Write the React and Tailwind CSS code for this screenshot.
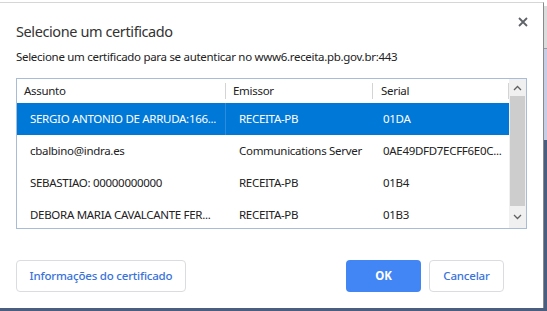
import React from "react";

const rows = [
  { subject: "SERGIO ANTONIO DE ARRUDA:166...", issuer: "RECEITA-PB", serial: "01DA", selected: true },
  { subject: "cbalbino@indra.es", issuer: "Communications Server", serial: "0AE49DFD7ECFF6E0C..." },
  { subject: "SEBASTIAO: 00000000000", issuer: "RECEITA-PB", serial: "01B4" },
  { subject: "DEBORA MARIA CAVALCANTE FER...", issuer: "RECEITA-PB", serial: "01B3" },
];

function Chevron({ up }) {
  return (
    <svg width="9" height="6" viewBox="0 0 9 6" className="block">
      <path
        d={up ? "M1 5 L4.5 1.5 L8 5" : "M1 1 L4.5 4.5 L8 1"}
        fill="none"
        stroke="#606060"
        strokeWidth="1.3"
      />
    </svg>
  );
}

function CertTable() {
  return (
    <div className="mt-[13px] ml-[16px] w-[511px] h-[151px] border border-[#a9bcd6] flex overflow-hidden text-[11.5px] tracking-[-0.3px] text-[#222]">
      <div className="w-[492px] flex flex-col">
        <div className="h-[24px] flex items-center shrink-0">
          <div className="w-[209px] shrink-0 pl-[7px] border-r border-[#d4d4d4] h-[16px] flex items-center">Assunto</div>
          <div className="w-[147px] shrink-0 pl-[7px] border-r border-[#d4d4d4] h-[16px] flex items-center">Emissor</div>
          <div className="w-[136px] shrink-0 pl-[8px] border-r border-[#d4d4d4] h-[16px] flex items-center">Serial</div>
        </div>
        {rows.map((r, i) => (
          <div
            key={i}
            className={`h-[32px] shrink-0 flex items-center ${r.selected ? "bg-[#0078d7] text-white" : ""}`}
          >
            <div className={`w-[209px] shrink-0 h-full pl-[13px] flex items-center whitespace-nowrap overflow-hidden ${r.selected ? "border-r border-[#2a8ce0]" : ""}`}>
              {r.subject}
            </div>
            <div className="w-[147px] shrink-0 pl-[13px] whitespace-nowrap overflow-hidden">{r.issuer}</div>
            <div className="w-[136px] shrink-0 pl-[10px] whitespace-nowrap overflow-hidden">{r.serial}</div>
          </div>
        ))}
      </div>
      <div className="w-[17px] flex flex-col bg-[#f0f0f0]">
        <div className="h-[17px] flex items-center justify-center shrink-0">
          <Chevron up />
        </div>
        <div className="h-[110px] bg-[#cdcdcd] mx-[1px] shrink-0" />
        <div className="flex-1 flex items-center justify-center">
          <Chevron />
        </div>
      </div>
    </div>
  );
}

export default function App() {
  return (
    <div
      className="w-[547px] h-[311px] bg-[#4b5e80] flex overflow-hidden"
      style={{ fontFamily: '"Noto Sans", "Open Sans", sans-serif' }}
    >
      <div className="w-[544px] flex flex-col">
        <div className="h-[2px] bg-white shrink-0" />
        <div className="h-[306px] bg-white border-t border-r border-t-[#d6d6d6] border-r-[#8a8a8a] flex flex-col relative">
          <div className="flex items-start justify-between pl-[16px] pr-[15px] pt-[18px]">
            <div className="text-[14.5px] tracking-[-0.4px] text-[#333] leading-[20px]">Selecione um certificado</div>
            <svg width="10" height="10" viewBox="0 0 10 10" className="-mt-[4px]">
              <path d="M1 1 L9 9 M9 1 L1 9" stroke="#5f6368" strokeWidth="1.8" />
            </svg>
          </div>
          <div className="pl-[16px] mt-[8px] text-[11.5px] tracking-[-0.3px] text-[#222] leading-[16px]">
            Selecione um certificado para se autenticar no www6.receita.pb.gov.br:443
          </div>
          <CertTable />
          <div className="flex items-center pl-[16px] pr-[39px] mt-[31px] text-[11.5px] tracking-[-0.2px]">
            <button className="w-[170px] h-[32px] border border-[#dadce0] rounded-[4px] text-[#3a72dc] font-medium">
              Informações do certificado
            </button>
            <div className="flex-1" />
            <button className="w-[75px] h-[32px] rounded-[4px] bg-[#4285f4] text-white font-bold">
              OK
            </button>
            <button className="ml-[8px] w-[75px] h-[32px] border border-[#dadce0] rounded-[4px] text-[#3a72dc] font-medium">
              Cancelar
            </button>
          </div>
        </div>
      </div>
      <div className="w-[3px] flex flex-col">
        <div className="h-[6px] bg-white" />
        <div className="h-[42px] bg-[#dcdcdc]" />
        <div className="h-[1px] bg-[#9a9a9a]" />
        <div className="h-[91px] bg-[#c9cde6]" />
        <div className="flex-1 bg-[#4b5e80]" />
      </div>
    </div>
  );
}
